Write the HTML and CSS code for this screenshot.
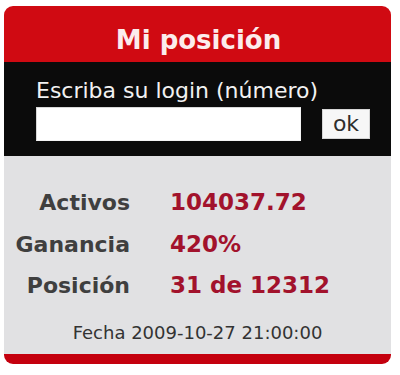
FILE: index.html
```html
<!DOCTYPE html>
<html lang="es">
<head>
<meta charset="utf-8">
<title>Mi posición</title>
<link rel="stylesheet" href="styles.css">
</head>
<body>
<div class="widget">
  <div class="head">Mi posición</div>
  <form class="login">
    <label class="login-label" for="num">Escriba su login (número)</label>
    <div class="login-row">
      <input class="login-input" id="num" type="text">
      <button class="login-btn" type="button">ok</button>
    </div>
  </form>
  <div class="stats">
    <div class="grid">
      <div class="lbl">Activos</div><div class="val">104037.72</div>
      <div class="lbl">Ganancia</div><div class="val">420%</div>
      <div class="lbl">Posición</div><div class="val">31 de 12312</div>
    </div>
    <div class="date">Fecha 2009-10-27 21:00:00</div>
  </div>
  <div class="foot"></div>
</div>
</body>
</html>
```
FILE: styles.css
```css
html, body {
  margin: 0;
  padding: 0;
  background: #ffffff;
}
body {
  font-family: "DejaVu Sans", Verdana, sans-serif;
}
.widget {
  margin: 6px 0 0 4px;
  width: 387px;
  border-radius: 9px;
  overflow: hidden;
}
.head {
  height: 56px;
  box-sizing: border-box;
  padding: 19px 0 0 2px;
  background: #d00a12;
  color: #fcecec;
  font-weight: bold;
  font-size: 26px;
  line-height: 30px;
  text-align: center;
}
.login {
  margin: 0;
  background: #0b0b0b;
  padding: 16px 0 15px 32px;
  display: flex;
  flex-direction: column;
}
.login-label {
  color: #f2f2f2;
  font-size: 22px;
  line-height: 26px;
}
.login-row {
  display: flex;
  align-items: center;
  gap: 21px;
  margin-top: 3px;
}
.login-input {
  width: 265px;
  height: 34px;
  box-sizing: border-box;
  margin: 0;
  border: 1px solid #d8d8d8;
  border-right-color: #f4f4f4;
  border-bottom-color: #f4f4f4;
  background: #ffffff;
}
.login-btn {
  width: 48px;
  height: 30px;
  box-sizing: border-box;
  margin: 0;
  padding: 0;
  border: 1px solid #d6d6d6;
  background: #f7f7f7;
  color: #2e2e2e;
  font-family: "DejaVu Sans", Verdana, sans-serif;
  font-size: 22px;
  line-height: 26px;
}
.stats {
  background: #e1e1e3;
  padding: 26px 0 9px;
}
.grid {
  display: grid;
  grid-template-columns: 126px 1fr;
  column-gap: 40px;
}
.lbl {
  text-align: right;
  font-weight: bold;
  font-size: 22px;
  line-height: 41.5px;
  color: #3f3f3f;
}
.val {
  font-weight: bold;
  font-size: 23px;
  line-height: 41.5px;
  color: #a2122c;
}
.date {
  margin-top: 14px;
  text-align: center;
  font-size: 18px;
  line-height: 24px;
  color: #333333;
}
.foot {
  height: 10px;
  background: #c4000e;
}
```
